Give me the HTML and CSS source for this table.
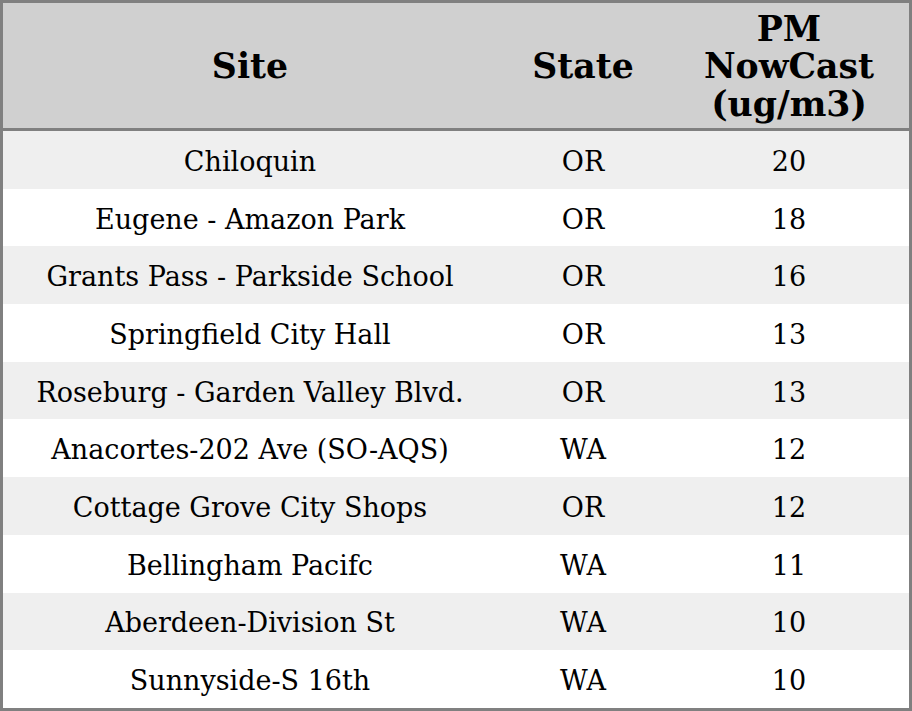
FILE: index.html
```html
<!DOCTYPE html>
<html>
<head>
<meta charset="utf-8">
<link rel="stylesheet" href="styles.css">
</head>
<body>
<table class="aq">
<colgroup><col class="c-site"><col class="c-state"><col class="c-pm"></colgroup>
<thead>
<tr><th>Site</th><th>State</th><th>PM<br>NowCast<br>(ug/m3)</th></tr>
</thead>
<tbody>
<tr><td>Chiloquin</td><td>OR</td><td>20</td></tr>
<tr><td>Eugene - Amazon Park</td><td>OR</td><td>18</td></tr>
<tr><td>Grants Pass - Parkside School</td><td>OR</td><td>16</td></tr>
<tr><td>Springfield City Hall</td><td>OR</td><td>13</td></tr>
<tr><td>Roseburg - Garden Valley Blvd.</td><td>OR</td><td>13</td></tr>
<tr><td>Anacortes-202 Ave (SO-AQS)</td><td>WA</td><td>12</td></tr>
<tr><td>Cottage Grove City Shops</td><td>OR</td><td>12</td></tr>
<tr><td>Bellingham Pacifc</td><td>WA</td><td>11</td></tr>
<tr><td>Aberdeen-Division St</td><td>WA</td><td>10</td></tr>
<tr><td>Sunnyside-S 16th</td><td>WA</td><td>10</td></tr>
</tbody>
</table>
</body>
</html>
```
FILE: styles.css
```css
html, body { margin: 0; padding: 0; background: #fff; }
body { font-family: "DejaVu Serif", serif; color: #000; }
.aq {
  width: 912px;
  border-collapse: separate;
  border-spacing: 0;
  border: 3px solid #808080;
  table-layout: fixed;
}
.c-site { width: 494px; }
.c-state { width: 172px; }
.c-pm { width: 240px; }
.aq th {
  background: #d0d0d0;
  font-size: 34.67px;
  font-weight: bold;
  line-height: 37.5px;
  height: 128px;
  padding: 1px 0 0;
  box-sizing: border-box;
  text-align: center;
  vertical-align: middle;
  border-bottom: 3px solid #808080;
}
.aq td {
  font-size: 27px;
  line-height: 30px;
  height: 57.7px;
  padding: 4px 0 0;
  text-align: center;
  vertical-align: middle;
  box-sizing: border-box;
}
.aq tbody tr:nth-child(odd) td { background: #efefef; }
```
